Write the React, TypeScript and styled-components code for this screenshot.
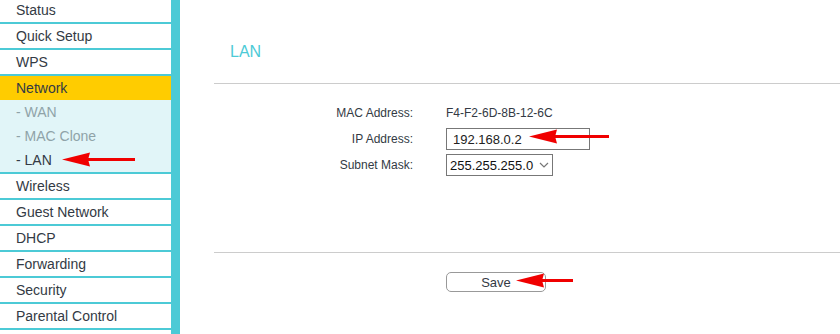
import styled, { createGlobalStyle } from "styled-components";

const GlobalStyle = createGlobalStyle`
  html, body {
    margin: 0;
    padding: 0;
    background: #ffffff;
    font-family: "Liberation Sans", Arial, sans-serif;
  }
`;

const TEAL = "#4ccad6";

type MenuItem = { label: string; sub?: string[]; active?: boolean };

const menu: MenuItem[] = [
  { label: "Status" },
  { label: "Quick Setup" },
  { label: "WPS" },
  { label: "Network", active: true, sub: ["WAN", "MAC Clone", "LAN"] },
  { label: "Wireless" },
  { label: "Guest Network" },
  { label: "DHCP" },
  { label: "Forwarding" },
  { label: "Security" },
  { label: "Parental Control" },
];

export default function App() {
  return (
    <>
      <GlobalStyle />
      <Page>
        <Sidebar>
          <MenuList>
            {menu.map((item) => (
              <li key={item.label}>
                <MenuLink $active={!!item.active}>{item.label}</MenuLink>
                {item.sub && (
                  <SubMenu>
                    {item.sub.map((s) => (
                      <SubLink key={s} $current={s === "LAN"}>
                        - {s}
                      </SubLink>
                    ))}
                  </SubMenu>
                )}
              </li>
            ))}
          </MenuList>
        </Sidebar>

        <Main>
          <Title>LAN</Title>
          <Rule />
          <Form>
            <Label>MAC Address:</Label>
            <Value>F4-F2-6D-8B-12-6C</Value>
            <Label>IP Address:</Label>
            <TextInput defaultValue="192.168.0.2" />
            <Label>Subnet Mask:</Label>
            <SelectBox>
              <span>255.255.255.0</span>
              <svg width="10" height="6" viewBox="0 0 10 6">
                <path
                  d="M1 1 L5 5 L9 1"
                  fill="none"
                  stroke="#777"
                  strokeWidth="1.2"
                />
              </svg>
            </SelectBox>
          </Form>
          <Rule />
          <Actions>
            <SaveButton>Save</SaveButton>
          </Actions>
        </Main>

        <Arrow $x={62} $y={159} $w={73} />
        <Arrow $x={529} $y={136} $w={80} />
        <Arrow $x={516} $y={280} $w={57} />
      </Page>
    </>
  );
}

function Arrow({ $x, $y, $w }: { $x: number; $y: number; $w: number }) {
  return (
    <ArrowSvg
      style={{ left: $x, top: $y - 7 }}
      width={$w}
      height={15}
      viewBox={`0 0 ${$w} 15`}
    >
      <path
        d={`M0 7.5 L28 0.5 L26.5 6 L${$w} 6 L${$w} 9 L26.5 9 L28 14.5 Z`}
        fill="#f00000"
      />
    </ArrowSvg>
  );
}

const Page = styled.div`
  position: relative;
  display: flex;
  width: 840px;
  height: 334px;
  overflow: hidden;
`;

const Sidebar = styled.nav`
  width: 171px;
  flex-shrink: 0;
  border-right: 9px solid ${TEAL};
  background: #ffffff;
`;

const MenuList = styled.ul`
  list-style: none;
  margin: -2px 0 0;
  padding: 0;

  & > li {
    border-bottom: 2px solid ${TEAL};
  }
`;

const MenuLink = styled.div<{ $active: boolean }>`
  height: 24px;
  line-height: 24px;
  padding-left: 16px;
  font-size: 14px;
  color: #333a44;
  background: ${(p) => (p.$active ? "#ffcc00" : "#ffffff")};
`;

const SubMenu = styled.div`
  background: #e1f5f8;
`;

const SubLink = styled.div<{ $current: boolean }>`
  height: 24px;
  line-height: 24px;
  padding-left: 16px;
  font-size: 14px;
  color: ${(p) => (p.$current ? "#333a44" : "#8fa3a8")};
`;

const Main = styled.main`
  flex: 1;
  padding-top: 42px;
  padding-left: 34px;
`;

const Title = styled.h2`
  margin: 0 0 0 16px;
  font-size: 16px;
  line-height: 20px;
  font-weight: normal;
  color: ${TEAL};
`;

const Rule = styled.hr`
  margin: 21px 0 0;
  border: none;
  border-top: 1px solid #cccccc;
  height: 0;
`;

const Form = styled.div`
  display: grid;
  grid-template-columns: 199px auto;
  column-gap: 33px;
  row-gap: 4px;
  align-items: center;
  justify-items: start;
  padding: 18px 0 55px;
  grid-auto-rows: 22px;
`;

const Label = styled.div`
  justify-self: end;
  font-size: 12px;
  color: #333a44;
`;

const Value = styled.div`
  font-size: 12px;
  color: #333a44;
`;

const TextInput = styled.input`
  box-sizing: border-box;
  width: 144px;
  height: 22px;
  border: 1px solid #777777;
  padding: 0 6px;
  font-family: "Liberation Sans", Arial, sans-serif;
  font-size: 13px;
  color: #222222;
  outline: none;
`;

const SelectBox = styled.div`
  box-sizing: border-box;
  width: 107px;
  height: 22px;
  border: 1px solid #777777;
  display: flex;
  align-items: center;
  gap: 6px;
  padding: 0 0 0 3px;
  font-size: 13px;
  color: #111111;
`;

const Actions = styled.div`
  display: flex;
  padding: 19px 0 0 232px;
`;

const SaveButton = styled.button`
  box-sizing: border-box;
  width: 100px;
  height: 20px;
  border: 1px solid #999999;
  border-radius: 5px;
  background: #ffffff;
  font-family: "Liberation Sans", Arial, sans-serif;
  font-size: 13px;
  color: #333a44;
  padding: 0;
`;

const ArrowSvg = styled.svg`
  position: absolute;
  pointer-events: none;
`;
